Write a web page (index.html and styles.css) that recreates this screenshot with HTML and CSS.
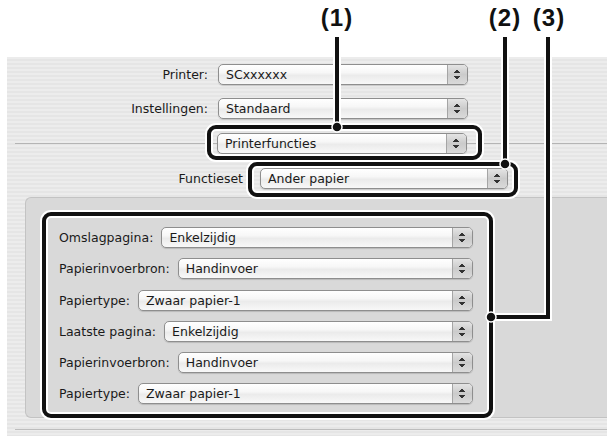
FILE: index.html
```html
<!DOCTYPE html>
<html lang="nl">
<head>
    <meta charset="UTF-8">
    <meta name="viewport" content="width=device-width, initial-scale=1.0">
    <title>Printerfuncties</title>
    <link rel="stylesheet" href="styles.css">
</head>
<body>
    <section class="dialog">
        <div class="top-row">
            <span class="top-label">Printer:</span>
            <div class="popup wide"><span>SCxxxxxx</span><i class="stepper"></i></div>
        </div>
        <div class="top-row">
            <span class="top-label">Instellingen:</span>
            <div class="popup wide"><span>Standaard</span><i class="stepper"></i></div>
        </div>
        <div class="sep-row">
            <div class="popup wide"><span>Printerfuncties</span><i class="stepper"></i></div>
        </div>
        <div class="top-row set-row">
            <span class="top-label">Functieset</span>
            <div class="popup wide"><span>Ander papier</span><i class="stepper"></i></div>
        </div>

        <div class="group">
            <div class="opt-row">
                <span class="opt-label">Omslagpagina:</span>
                <div class="popup"><span>Enkelzijdig</span><i class="stepper"></i></div>
            </div>
            <div class="opt-row">
                <span class="opt-label">Papierinvoerbron:</span>
                <div class="popup"><span>Handinvoer</span><i class="stepper"></i></div>
            </div>
            <div class="opt-row">
                <span class="opt-label">Papiertype:</span>
                <div class="popup"><span>Zwaar papier-1</span><i class="stepper"></i></div>
            </div>
            <div class="opt-row">
                <span class="opt-label">Laatste pagina:</span>
                <div class="popup"><span>Enkelzijdig</span><i class="stepper"></i></div>
            </div>
            <div class="opt-row">
                <span class="opt-label">Papierinvoerbron:</span>
                <div class="popup"><span>Handinvoer</span><i class="stepper"></i></div>
            </div>
            <div class="opt-row">
                <span class="opt-label">Papiertype:</span>
                <div class="popup"><span>Zwaar papier-1</span><i class="stepper"></i></div>
            </div>
        </div>

        <div class="bottom-line"></div>
    </section>

    <!-- callout layer drawn over the dialog -->
    <div class="callouts">
        <svg width="607" height="436" viewBox="0 0 607 436">
            <g class="halo">
                <rect x="209" y="127" width="271" height="31" rx="7"/>
                <rect x="250" y="164" width="266" height="31" rx="7"/>
                <rect x="44" y="214" width="447" height="202" rx="7"/>
                <path d="M337 37V127M505 37V164M548 37V317H491"/>
            </g>
            <g class="ink">
                <rect x="209" y="127" width="271" height="31" rx="7"/>
                <rect x="250" y="164" width="266" height="31" rx="7"/>
                <rect x="44" y="214" width="447" height="202" rx="7"/>
                <path d="M337 37V127M505 37V164M548 37V317H491"/>
            </g>
            <g class="dots">
                <circle cx="337" cy="127" r="5"/>
                <circle cx="505" cy="164" r="5"/>
                <circle cx="491" cy="317" r="5"/>
            </g>
        </svg>
        <span class="num n1">(1)</span>
        <span class="num n2">(2)</span>
        <span class="num n3">(3)</span>
    </div>
</body>
</html>
```
FILE: styles.css
```css
body {
    margin: 0;
    width: 607px;
    height: 436px;
    overflow: hidden;
    position: relative;
    background: #fff;
    font-family: "DejaVu Sans", "Liberation Sans", sans-serif;
    font-size: 12.5px;
    color: #1a1a1a;
}

.dialog {
    margin: 57px 0 0 7px;
    height: 379px;
    box-sizing: border-box;
    padding-top: 6px;
    background: repeating-linear-gradient(#ececec 0px, #ececec 2px, #e5e5e5 2px, #e5e5e5 4px);
}

.top-row {
    display: flex;
    align-items: center;
    height: 22px;
    margin-bottom: 12px;
}
.top-label {
    width: 211px;
    flex: none;
    text-align: right;
    padding-right: 10px;
    box-sizing: border-box;
}
.popup.wide {
    width: 250px;
    flex: none;
}

.sep-row {
    height: 21px;
    padding-left: 210px;
    margin-top: 14px;
    background: linear-gradient(#b4b4b4, #b4b4b4) no-repeat 8px 10px / calc(100% - 8px) 1px;
}
.set-row {
    margin-top: 14px;
    height: 21px;
    margin-bottom: 0;
}
.set-row .top-label {
    width: 253px;
    padding-right: 17px;
}
.set-row .popup.wide {
    width: 248px;
}

.popup {
    display: flex;
    align-items: stretch;
    height: 21px;
    box-sizing: border-box;
    border: 1px solid #8e8e8e;
    border-radius: 5px;
    background: linear-gradient(#ffffff 0%, #f7f7f7 40%, #ebebeb 55%, #f8f8f8 100%);
    box-shadow: 0 1px 1px rgba(0, 0, 0, 0.15);
    overflow: hidden;
}
.popup span {
    flex: 1;
    padding-left: 7px;
    line-height: 19px;
    white-space: nowrap;
}
.stepper {
    width: 19px;
    border-left: 1px solid #a5a5a5;
    background:
        linear-gradient(to bottom right, transparent 50%, #333 50%) no-repeat 6px 4px / 3px 4px,
        linear-gradient(to bottom left, transparent 50%, #333 50%) no-repeat 9px 4px / 3px 4px,
        linear-gradient(to top right, transparent 50%, #333 50%) no-repeat 6px 11px / 3px 4px,
        linear-gradient(to top left, transparent 50%, #333 50%) no-repeat 9px 11px / 3px 4px,
        linear-gradient(#e4e4e4, #cbcbcb 50%, #dadada);
}

.group {
    margin: 8px 0 0 18px;
    width: 600px;
    height: 221px;
    box-sizing: border-box;
    padding: 29px 0 0 33px;
    background: #d9d9d9;
    border: 1px solid #c3c3c3;
    border-right: none;
    border-radius: 6px 0 0 6px;
    display: flex;
    flex-direction: column;
    gap: 10.3px;
}
.opt-row {
    display: flex;
    align-items: center;
    gap: 8px;
    width: 414px;
}
.opt-row .popup {
    flex: 1;
}

.bottom-line {
    margin: 11px 0 0 8px;
    height: 1px;
    background: #bdbdbd;
}

.callouts {
    position: absolute;
    top: 0;
    left: 0;
    width: 607px;
    height: 436px;
    pointer-events: none;
}
.callouts svg {
    display: block;
}
.halo rect, .halo path {
    fill: none;
    stroke: #fff;
    stroke-width: 8;
}
.ink rect, .ink path {
    fill: none;
    stroke: #111;
    stroke-width: 4;
}
.dots circle {
    fill: #111;
    stroke: #fff;
    stroke-width: 1.5;
}

.num {
    position: absolute;
    top: 4px;
    width: 40px;
    margin-left: -20px;
    text-align: center;
    font-family: "Liberation Sans Narrow", "Liberation Sans", sans-serif;
    font-weight: bold;
    font-size: 24px;
    letter-spacing: 1px;
    color: #111;
}
.n1 { left: 337px; }
.n2 { left: 505px; }
.n3 { left: 549px; }
```
